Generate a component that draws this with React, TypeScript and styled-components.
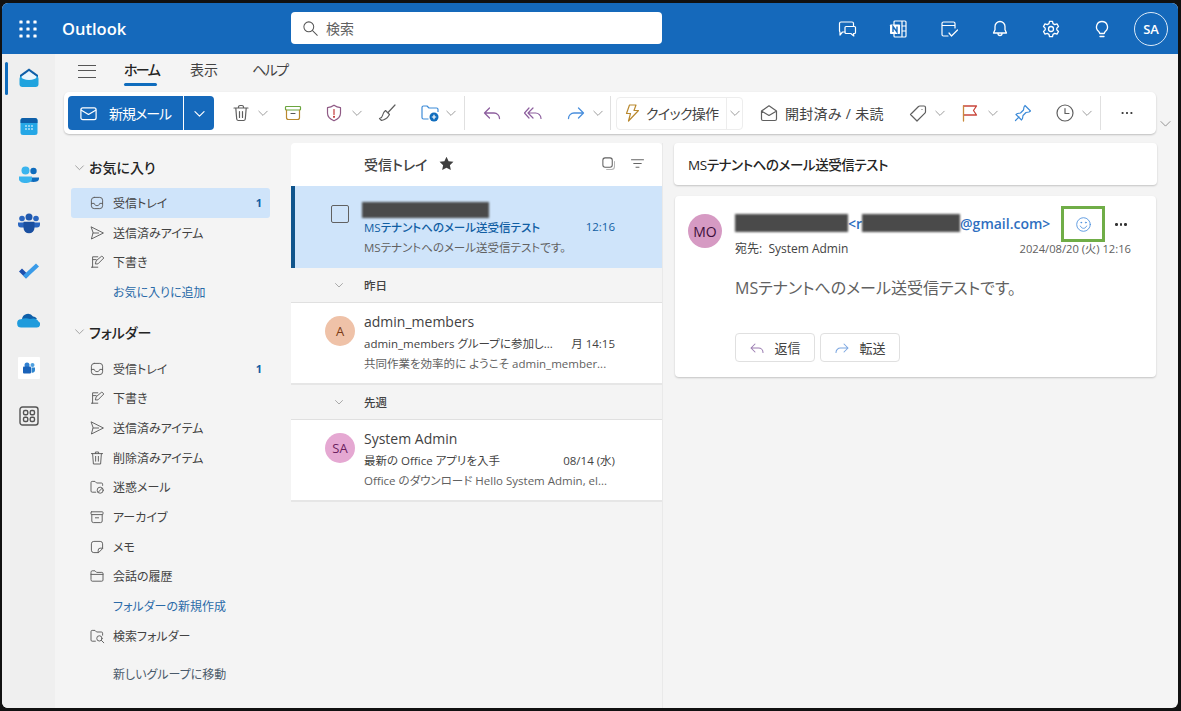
import React from "react";
import styled, { createGlobalStyle } from "styled-components";

const Global = createGlobalStyle`
  html, body { margin: 0; padding: 0; background: #111; }
  * { box-sizing: border-box; }
  body { font-family: "Open Sans", "Noto Sans CJK JP", sans-serif; color: #242424; font-feature-settings: "palt" 1; }
`;

const Frame = styled.div`
  width: 1181px; height: 711px; background: #111; padding: 3px 3px 3px 2px; overflow: hidden;
`;
const Window = styled.div`
  width: 100%; height: 100%; background: #f4f4f4; border-radius: 6px; overflow: hidden;
  display: flex; flex-direction: column;
`;
const Header = styled.header`
  height: 51px; flex: none; background: #1569bb; display: flex; align-items: center; color: #fff; position: relative;
`;
const Waffle = styled.div`
  width: 60px; flex: none; display: flex; justify-content: center; margin-left: -4px;
`;
const Brand = styled.div`
  width: 233px; flex: none; font-size: 16.5px; font-weight: 600; padding-left: 4px;
`;
const Search = styled.div`
  width: 371px; height: 32px; flex: none; background: #fff; border-radius: 4px; display: flex; align-items: center;
  gap: 7px; padding-left: 11px; color: #616161; font-size: 14px; margin-top: -1px;
`;
const HeaderIcons = styled.div`
  margin-left: auto; display: flex; align-items: center; padding-right: 9px;
`;
const HeaderBtn = styled.div`
  width: 51px; display: flex; justify-content: center;
`;
const Me = styled.div`
  width: 34px; height: 34px; border: 1.3px solid #dbe9f7; border-radius: 50%; display: flex; align-items: center;
  justify-content: center; font-size: 13px; font-weight: 600; margin-left: 7px; margin-right: 1px;
`;
const Body = styled.div`
  flex: 1; min-height: 0; display: flex;
`;
const Rail = styled.nav`
  width: 53px; flex: none; background: #efefef; display: flex; flex-direction: column; position: relative;
`;
const RailBtn = styled.div<{ $active?: boolean }>`
  height: 48.3px; flex: none; display: flex; align-items: center; justify-content: center; position: relative;
  ${(p) => p.$active && `&::before { content: ""; position: absolute; left: 3px; top: 8px; width: 3px; height: 33px; background: #0f6cbd; border-radius: 2px; }`}
`;
const Main = styled.div`
  flex: 1; min-width: 0; display: flex; flex-direction: column;
`;
const Tabs = styled.div`
  height: 38px; flex: none; display: flex; align-items: center; padding-left: 23px; font-size: 14px; color: #424242;
`;
const Burger = styled.div`
  width: 18px; height: 13px; border-top: 1.3px solid #555; border-bottom: 1.3px solid #555; position: relative; margin-right: 28px; margin-top: -4px;
  &::after { content: ""; position: absolute; left: 0; right: 0; top: 4.6px; height: 1.3px; background: #555; }
`;
const Tab = styled.div<{ $active?: boolean; $w: number; $gap: number; $tight?: boolean }>`
  height: 100%; width: ${(p) => p.$w}px; display: flex; align-items: center; margin-right: ${(p) => p.$gap}px; position: relative; padding-bottom: 8px; white-space: nowrap;
  letter-spacing: ${(p) => (p.$tight ? "-1.6px" : "0")};
  color: ${(p) => (p.$active ? "#242424" : "#424242")}; font-weight: ${(p) => (p.$active ? 500 : 400)};
  ${(p) => p.$active && `&::after { content: ""; position: absolute; left: 0; right: 0; bottom: 6px; height: 3px; background: #0f6cbd; border-radius: 2px; }`}
`;
const ToolbarRow = styled.div`
  flex: none; display: flex; align-items: flex-end; padding-left: 9px;
`;
const Toolbar = styled.div`
  width: 1092px; height: 42px; background: #fff; border-radius: 5px; box-shadow: 0 1px 2px rgba(0,0,0,.22);
  display: flex; align-items: center; padding-left: 4px; flex: none;
`;
const Expand = styled.div`
  width: 18px; display: flex; justify-content: center; padding-bottom: 4px;
`;
const NewMail = styled.div`
  width: 146px; height: 34px; background: #1569bb; border-radius: 4px; color: #fff; display: flex; align-items: center; font-size: 14px; flex: none;
`;
const NewMailMain = styled.div`
  width: 116px; height: 100%; border-right: 1px solid #fff; display: flex; align-items: center; padding-left: 11px; gap: 11px; letter-spacing: -1px; white-space: nowrap;
`;
const NewMailDrop = styled.div`
  flex: 1; display: flex; justify-content: center; padding-left: 1px;
`;
const ToolSlot = styled.div<{ $w: number }>`
  width: ${(p) => p.$w}px; flex: none; display: flex; align-items: center; justify-content: center; color: #424242;
`;
const Divider = styled.div`
  width: 1px; height: 34px; background: #e0e0e0; flex: none;
`;
const Quick = styled.div`
  width: 127px; height: 33px; flex: none; border: 1px solid #ededed; border-radius: 4px; display: flex; align-items: center; font-size: 14px; color: #424242;
`;
const QuickMain = styled.div`
  width: 110px; height: 100%; border-right: 1px solid #ededed; display: flex; align-items: center; padding-left: 5px; gap: 4px; white-space: nowrap; letter-spacing: -.7px;
`;
const QuickDrop = styled.div`
  flex: 1; display: flex; justify-content: center;
`;
const ReadToggle = styled.div`
  flex: none; display: flex; align-items: center; gap: 6px; font-size: 14px; color: #424242; width: 157px; padding-left: 16px; white-space: nowrap; letter-spacing: .3px;
`;
const Columns = styled.div`
  flex: 1; min-height: 0; display: flex; padding-top: 9px;
`;
const Folders = styled.aside`
  width: 236px; flex: none; padding: 11px 21px 0 16px;
`;
const SectionHead = styled.div<{ $mt?: number; $mb: number }>`
  height: 26px; margin-top: ${(p) => p.$mt ?? 0}px; margin-bottom: ${(p) => p.$mb}px; display: flex; align-items: center; gap: 4px; padding-left: 3px; font-size: 14px; font-weight: 500; color: #242424;
`;
const FolderRow = styled.div<{ $selected?: boolean; $mt?: number }>`
  height: 29.7px; margin-top: ${(p) => p.$mt ?? 0}px; display: flex; align-items: center; padding-left: 18px; gap: 8px; font-size: 12px; color: #424242;
  border-radius: 3px; background: ${(p) => (p.$selected ? "#cfe4fa" : "transparent")};
`;
const FolderLink = styled.span<{ $color?: string }>`
  padding-left: 24px; color: ${(p) => p.$color ?? "#2a6aa8"};
`;
const Count = styled.span`
  margin-left: auto; padding-right: 8px; font-size: 11px; font-weight: 700; color: #115ea3;
`;
const List = styled.section`
  width: 372px; flex: none; display: flex; flex-direction: column; border-right: 1px solid #e9e9e9;
`;
const ListHead = styled.div`
  height: 43px; flex: none; background: #fff; border-radius: 4px 4px 0 0; display: flex; align-items: center; padding-left: 73px; padding-bottom: 2px; font-size: 14px; font-weight: 500; color: #424242; position: relative;
`;
const ListHeadTools = styled.div`
  margin-left: auto; display: flex; align-items: center; gap: 14px; padding-right: 17px;
`;
const Star = styled.span`
  margin-left: 12px; display: flex;
`;
const Selected = styled.div`
  height: 82px; flex: none; background: #cfe4fa; border-left: 4px solid #0f548c; display: flex; padding-left: 36px; padding-right: 47px;
`;
const CheckCol = styled.div`
  width: 33px; flex: none; padding-top: 19px;
`;
const Check = styled.div`
  width: 18px; height: 18px; border: 1.4px solid #616161; border-radius: 2px;
`;
const MsgCol = styled.div`
  flex: 1; min-width: 0; display: flex; flex-direction: column;
`;
const Redact = styled.span<{ $w: number; $h: number }>`
  display: inline-block; flex: none; width: ${(p) => p.$w}px; height: ${(p) => p.$h}px; background: #4a4a4a; filter: blur(.8px); vertical-align: middle;
`;
const RedactWrap = styled.div`
  height: 30px; padding-top: 11px; margin-left: -2px;
`;
const SubjectLine = styled.div<{ $unread?: boolean }>`
  display: flex; justify-content: space-between; align-items: center; height: 21px; font-size: 11.5px; white-space: nowrap;
  color: ${(p) => (p.$unread ? "#115ea3" : "#424242")}; font-weight: ${(p) => (p.$unread ? 500 : 400)};
`;
const Preview = styled.div`
  height: 20px; display: flex; align-items: center; font-size: 11.5px; color: #616161; white-space: nowrap;
`;
const Group = styled.div`
  height: 35px; flex: none; display: flex; align-items: center; background: #f4f4f4; border-bottom: 1px solid #e0e0e0; padding-left: 43px; gap: 20px; font-size: 11.5px; font-weight: 500; color: #424242;
`;
const Item = styled.div`
  height: 82px; flex: none; background: #fff; border-bottom: 2px solid #e6e6e6; display: flex; padding-left: 34px; padding-right: 47px;
`;
const AvatarCol = styled.div`
  width: 39px; flex: none; padding-top: 13px;
`;
const Avatar = styled.div<{ $bg: string; $fg: string; $size: number; $fs: number }>`
  width: ${(p) => p.$size}px; height: ${(p) => p.$size}px; border-radius: 50%; background: ${(p) => p.$bg}; color: ${(p) => p.$fg};
  display: flex; align-items: center; justify-content: center; font-size: ${(p) => p.$fs}px; flex: none;
`;
const Sender = styled.div`
  height: 21px; margin-top: 8px; font-size: 14px; color: #424242; display: flex; align-items: center;
`;
const Reader = styled.section`
  flex: none; width: 483px; margin-left: 11px; display: flex; flex-direction: column; gap: 11px;
`;
const SubjectCard = styled.div`
  height: 42px; background: #fff; border-radius: 4px; box-shadow: 0 1px 2px rgba(0,0,0,.2); display: flex; align-items: center; padding-left: 14px; padding-bottom: 1px; font-size: 13.5px; letter-spacing: -.4px; font-weight: 500; color: #242424;
`;
const MsgCard = styled.article`
  height: 181px; width: 481px; margin-left: 1px; background: #fff; border-radius: 4px; box-shadow: 0 1px 2px rgba(0,0,0,.2); display: flex; padding: 18px 0 0 13px;
`;
const MsgMain = styled.div`
  flex: 1; min-width: 0; padding-left: 13px;
`;
const FromLine = styled.div`
  height: 20px; margin-top: -1px; display: flex; align-items: center; font-size: 14px; font-weight: 600; color: #2f6fc0; white-space: nowrap; position: relative;
`;
const GreenBox = styled.div`
  position: absolute; left: 326px; top: -7px; width: 44px; height: 36px; border: 3.5px solid #70ad47; display: flex; align-items: center; justify-content: center;
`;
const Dots = styled.div`
  position: absolute; left: 380px; top: 4px; display: flex; gap: 2px;
  & > i { width: 2.6px; height: 2.6px; border-radius: 50%; background: #333; margin-top: 6px; }
`;
const ToLine = styled.div`
  display: flex; justify-content: space-between; height: 18px; margin-top: 6px; align-items: center; font-size: 12px; color: #424242; padding-right: 25px;
`;
const DateText = styled.span`
  font-size: 11.2px; color: #616161;
`;
const MsgBody = styled.div`
  margin-top: 18px; height: 24px; display: flex; align-items: center; font-size: 16px; color: #616161;
`;
const Actions = styled.div`
  display: flex; gap: 5px; margin-top: 34px;
`;
const ActionBtn = styled.div`
  width: 80px; height: 29px; border: 1px solid #e0e0e0; border-radius: 4px; display: flex; align-items: center; justify-content: center; gap: 9px; font-size: 13px; color: #424242;
`;

const Ico = ({ s = 20, children, c = "currentColor", w = 1.2 }: { s?: number; children: React.ReactNode; c?: string; w?: number }) => (
  <svg width={s} height={s} viewBox="0 0 20 20" fill="none" stroke={c} strokeWidth={w} strokeLinecap="round" strokeLinejoin="round" style={{ flex: "none", display: "block" }}>
    {children}
  </svg>
);
const Chev = ({ c = "#8a8a8a", s = 12, w = 1.4 }: { c?: string; s?: number; w?: number }) => (
  <Ico s={s} c={c} w={w}><path d="M3 7l7 7 7-7" /></Ico>
);
const I = {
  waffle: () => (
    <svg width="18" height="18" viewBox="0 0 18 18" fill="#fff" style={{ display: "block" }}>
      {[2, 9, 16].flatMap((y) => [2, 9, 16].map((x) => <rect key={`${x}-${y}`} x={x - 1.6} y={y - 1.6} width="3.2" height="3.2" rx=".6" />))}
    </svg>
  ),
  search: () => <Ico s={17} c="#555"><circle cx="8" cy="8" r="5.8" /><path d="M12.4 12.4L18 18" /></Ico>,
  chat: () => <Ico s={20} c="#fff"><path d="M4 3h11a1.5 1.5 0 011.5 1.5V7M8 13H5.500L3 16v-3a1.500 1.500 0 01-.5-1V4.500A1.500 1.500 0 014 3" /><path d="M9 7.500h8.500a1 1 0 011 1v5a1 1 0 01-1 1h-1l.3 2.500-3-2.500H9a1 1 0 01-1-1v-5a1 1 0 011-1z" /></Ico>,
  onenote: () => (
    <svg width="20" height="20" viewBox="0 0 20 20" fill="none" stroke="#fff" strokeWidth="1.2" style={{ display: "block" }}>
      <rect x="6" y="2" width="12" height="16" rx="1" /><path d="M14 2v16M14 7h4M14 12h4" />
      <rect x="2" y="5.500" width="10" height="9.500" rx=".8" fill="#fff" stroke="none" />
      <path d="M5 13V7.500l4 5.500V7.500" stroke="#1569bb" strokeWidth="1.4" />
    </svg>
  ),
  todoCal: () => <Ico s={20} c="#fff"><path d="M9 17H4.500A1.500 1.500 0 013 15.500v-11A1.500 1.500 0 014.500 3h10A1.500 1.500 0 0116 4.500V9M3 6.500h13" /><path d="M10 14l2.500 3 6-6" /></Ico>,
  bell: () => <Ico s={20} c="#fff" w={1.3}><path d="M10 2.500a5 5 0 015 5v3.300l1.500 3.200h-13L5 10.800V7.500a5 5 0 015-5zM8 14.500a2 2 0 004 0" /></Ico>,
  gear: () => <Ico s={20} c="#fff" w={1.3}><circle cx="10" cy="10" r="2.500" /><path d="M8.500 2.300h3l.5 2.300 1.700 1 2.300-.7 1.500 2.600-1.700 1.600v1.800l1.700 1.600-1.500 2.600-2.300-.7-1.700 1-.5 2.300h-3l-.5-2.300-1.700-1-2.300.7-1.500-2.600 1.700-1.600V9.100L2.500 7.500 4 4.900l2.300.7 1.700-1z" /></Ico>,
  bulb: () => <Ico s={20} c="#fff" w={1.3}><path d="M10 2.500a5.500 5.500 0 00-3.300 9.900c.7.6.9 1.300 1.100 2.100h4.400c.2-.8.4-1.500 1.100-2.100A5.500 5.500 0 0010 2.500zM8 17.500h4" /></Ico>,
  railMail: () => (
    <svg width="22" height="22" viewBox="0 0 22 22" style={{ display: "block" }}>
      <path d="M11 1.500L20 8v3H2V8z" fill="#0f5fa8" /><path d="M11 4l6 4.500H5z" fill="#e8f3fb" />
      <rect x="1.500" y="9" width="19" height="11" rx="3" fill="#20a3de" /><ellipse cx="11" cy="10" rx="7.500" ry="3" fill="#eaf5fc" />
    </svg>
  ),
  railCal: () => (
    <svg width="20" height="20" viewBox="0 0 20 20" style={{ display: "block" }}>
      <rect x="1.500" y="2" width="17" height="17" rx="2.500" fill="#25a7e6" /><path d="M1.500 7V4.500A2.500 2.500 0 014 2h12a2.500 2.500 0 012.500 2.500V7z" fill="#0f5fa8" />
      {[7, 10, 13].flatMap((x) => [10, 13].map((y) => <rect key={`${x}${y}`} x={x - .7} y={y - .7} width="1.4" height="1.4" fill="#fff" />))}
    </svg>
  ),
  railPeople: () => (
    <svg width="22" height="20" viewBox="0 0 22 20" style={{ display: "block" }}>
      <circle cx="15.500" cy="6" r="3.200" fill="#0f6cbd" /><path d="M10 12.500h11v1.500c0 2-2.500 3-5.500 3S10 16 10 14z" fill="#0f6cbd" />
      <circle cx="7.500" cy="5.500" r="4" fill="#3ab4ee" /><path d="M1 11.500h13v2.500c0 2.500-3 4-6.500 4S1 16.500 1 14z" fill="#3ab4ee" />
    </svg>
  ),
  railTeams: () => (
    <svg width="22" height="21" viewBox="0 0 22 21" style={{ display: "block" }}>
      <circle cx="4" cy="5.500" r="2.800" fill="#2a66c0" /><circle cx="18" cy="5.500" r="2.800" fill="#2a66c0" /><circle cx="11" cy="4" r="3.500" fill="#1f58ad" />
      <path d="M0 9.500h6v5H3a3 3 0 01-3-3zM16 9.500h6v2a3 3 0 01-3 3h-3z" fill="#2a66c0" /><path d="M5.500 8.800h11v6a5.500 5.500 0 01-11 0z" fill="#1a4fa0" />
    </svg>
  ),
  railTodo: () => (
    <svg width="22" height="20" viewBox="0 0 22 20" style={{ display: "block" }}>
      <path d="M8 17.500L1 10.500l3-3 7 7z" fill="#1c4fae" /><path d="M8 17.500l-3-3L18 2.500l3 3z" fill="#3a9be8" />
    </svg>
  ),
  railCloud: () => (
    <svg width="23" height="16" viewBox="0 0 23 16" style={{ display: "block" }}>
      <path d="M5 7a6 6 0 0111-2.500c2 .2 3 1 4 2.500z" fill="#0f5fa8" /><path d="M4.500 15.500A4 4 0 014 7.300C7 6 10 6 13 7c3-1 7-1 8.500 2.500a3.200 3.200 0 01-1.500 6z" fill="#1f9bdc" />
    </svg>
  ),
  railCopilot: () => (
    <svg width="22" height="22" viewBox="0 0 22 22" style={{ display: "block" }}>
      <rect width="22" height="22" rx="1" fill="#fff" /><circle cx="14.500" cy="8" r="2" fill="#4d9fe0" /><circle cx="9" cy="8" r="2.500" fill="#2f7fd0" /><rect x="5" y="9.500" width="8" height="7" rx="1" fill="#1a62b8" />
      <path d="M13.500 10.500h3.500v2.500a2.500 2.500 0 01-3.500 2.500z" fill="#2f86d0" />
    </svg>
  ),
  railApps: () => (
    <svg width="20" height="20" viewBox="0 0 20 20" fill="none" stroke="#555" strokeWidth="1.4" style={{ display: "block" }}>
      <rect x="1" y="1" width="18" height="18" rx="2.500" /><rect x="4.500" y="4.500" width="4.300" height="4.300" rx="1.500" /><rect x="11.200" y="4.500" width="4.300" height="4.300" rx="1.500" /><rect x="4.500" y="11.200" width="4.300" height="4.300" rx="1.500" /><rect x="11.200" y="11.200" width="4.300" height="4.300" rx="1.500" />
    </svg>
  ),
  mail: () => <Ico s={19} c="#fff" w={1.3}><rect x="2" y="4" width="16" height="12.500" rx="2" /><path d="M2.500 6.500L10 11l7.500-4.500" /></Ico>,
  trash: () => <Ico s={20} c="#5f5f5f"><path d="M3 5h14M7.500 5V3.800A1.500 1.500 0 019 2.500h2a1.500 1.500 0 011.500 1.300V5M4.800 5l.9 11a1.800 1.800 0 001.800 1.500h5a1.800 1.800 0 001.800-1.500l.9-11M8.500 8.500v6M11.500 8.500v6" /></Ico>,
  archive: () => <Ico s={20} c="#6ba53f"><rect x="2.500" y="3.500" width="15" height="3.500" rx=".8" /><path d="M3.500 7v7.500a2 2 0 002 2h9a2 2 0 002-2V7" stroke="#b9892f" /><path d="M8 10.500h4" stroke="#555" /></Ico>,
  shield: () => <Ico s={20} c="#8f5a85"><path d="M10 2.200c2.200 1.600 4.500 2.300 6.500 2.500v5.500c0 3.600-2.800 6-6.500 7.600-3.700-1.600-6.500-4-6.500-7.600V4.700c2-.2 4.300-.9 6.500-2.500z" /><path d="M10 6.500v5" stroke="#c43a3a" /><circle cx="10" cy="13.800" r=".5" stroke="#c43a3a" /></Ico>,
  broom: () => <Ico s={20} c="#5f5f5f"><path d="M18 2l-6.500 7M8.500 7.500l4 4-1 1.500c-1.500 2.500-4 3.800-7 4.500l-2-2c1.500-.5 2.800-1.500 3-3 .3-1.500 1-3.500 3-5z" /></Ico>,
  moveFolder: () => <svg width="20" height="20" viewBox="0 0 20 20" fill="none" style={{ display: "block" }}><path d="M8.500 16H3.500A1.500 1.500 0 012 14.500v-10A1.500 1.500 0 013.500 3h3.500l2 2h7.500A1.500 1.500 0 0118 6.500V9" stroke="#3d8bd8" strokeWidth="1.2" strokeLinejoin="round" /><circle cx="14" cy="14" r="4.500" fill="#0f6cbd" /><path d="M14 11.800v4.400M11.800 14h4.400" stroke="#fff" strokeWidth="1.2" /></svg>,
  reply: ({ c = "#8d5f9e", s = 20 }: { c?: string; s?: number }) => <Ico s={s} c={c} w={1.3}><path d="M7.500 5L2.500 10l5 5M2.500 10H12a5.500 5.500 0 015.500 5.500" /></Ico>,
  replyAll: () => <Ico s={20} c="#8d5f9e" w={1.2}><path d="M6 5L1.500 10 6 15M10 5l-5 5 5 5M5 10h7.500a5.500 5.500 0 015.500 5.500" /></Ico>,
  forward: ({ c = "#4a8fdd", s = 20 }: { c?: string; s?: number }) => <Ico s={s} c={c} w={1.3}><path d="M12.500 5l5 5-5 5M17.500 10H8a5.500 5.500 0 00-5.500 5.500" /></Ico>,
  bolt: () => <Ico s={20} c="#b9892f"><path d="M7.500 2h6.500l-2 5.500h4.500l-10 10.500 2-7.500H4.500z" /></Ico>,
  openMail: () => <Ico s={20} c="#5f5f5f"><path d="M2.500 8L10 2.800 17.500 8v8a1.500 1.500 0 01-1.500 1.500H4A1.500 1.500 0 012.500 16zM2.800 8.200L10 12.500l7.200-4.300" /></Ico>,
  tag: () => <Ico s={20} c="#5f5f5f"><path d="M2.500 11.500L10.500 3.500a2 2 0 011.400-.5H16a1.500 1.500 0 011.500 1.500v4.200a2 2 0 01-.6 1.400L9 18zM14 6.500h.01" /></Ico>,
  flag: () => <svg width="20" height="20" viewBox="0 0 20 20" fill="none" strokeWidth="1.3" strokeLinejoin="round" strokeLinecap="round" style={{ display: "block" }}><path d="M3.500 3h13l-3 4.500 3 4.500h-13" stroke="#c9453b" /><path d="M3.500 3v15" stroke="#c98a3b" /></svg>,
  pin: () => <Ico s={20} c="#3d8bd8"><path d="M12 2.500l5.500 5.500-1.500 1-3 .5-3 3-.5 3-1 1.500-5.500-5.500 1.500-1 3-.5 3-3 .5-3zM6 14l-3.500 3.500" /></Ico>,
  clock: () => <Ico s={20} c="#5f5f5f"><circle cx="10" cy="10" r="8" /><path d="M10 5.500V10.500H14" /></Ico>,
  inbox: () => <Ico s={16} c="#5f5f5f"><rect x="3" y="3" width="14" height="14" rx="3.500" /><path d="M3 10.500h3.500c.5 2 1.800 2.800 3.500 2.800s3-.8 3.500-2.800H17" /></Ico>,
  send: () => <Ico s={16} c="#5f5f5f"><path d="M3 2.500L18 10 3 17.500l2-7.500zM5 10h7" /></Ico>,
  draft: () => <Ico s={16} c="#5f5f5f"><path d="M11 3.500H4.500v13" /><path d="M3 16.500h8M8 12l1-3.500 7-6 2.500 2.500-7 7z" /><path d="M5 7h4" /></Ico>,
  del: () => <Ico s={16} c="#5f5f5f"><path d="M3 4.500h14M8 4.500v-2h4v2M4.500 4.500l1 13h9l1-13M8.300 8v6M11.700 8v6" /></Ico>,
  junk: () => <Ico s={16} c="#5f5f5f"><path d="M8.500 16.500H4A1.500 1.500 0 012.500 15V4.500A1.500 1.500 0 014 3h3.500l2 2h6A1.500 1.500 0 0117 6.500V8" /><circle cx="14" cy="14" r="3.800" /><path d="M11.500 16.500l5-5" /></Ico>,
  arch: () => <Ico s={16} c="#5f5f5f"><rect x="2.500" y="3.500" width="15" height="3.500" rx=".8" /><path d="M3.500 7v8a2 2 0 002 2h9a2 2 0 002-2V7M8 11h4" /></Ico>,
  note: () => <Ico s={16} c="#5f5f5f"><path d="M11.500 17H6a3 3 0 01-3-3V6a3 3 0 013-3h8a3 3 0 013 3v5.500zM11.500 17v-3a2.500 2.500 0 012.500-2.500h3" /></Ico>,
  folder: () => <Ico s={16} c="#5f5f5f"><path d="M2.500 5A1.500 1.500 0 014 3.500h3.500l2 2h6.500A1.500 1.500 0 0117.500 7v8a1.500 1.500 0 01-1.500 1.500H4A1.500 1.500 0 012.500 15zM2.500 8h15" /></Ico>,
  searchFolder: () => <Ico s={16} c="#5f5f5f"><path d="M8 16.500H4A1.500 1.500 0 012.500 15V4.500A1.500 1.500 0 014 3h3.500l2 2h6A1.500 1.500 0 0117 6.500V9" /><circle cx="13" cy="13" r="3.300" /><path d="M15.500 15.500L18.500 18.500" /></Ico>,
  star: () => <svg width="15" height="15" viewBox="0 0 20 20" fill="#3f3f3f" style={{ display: "block" }}><path d="M10 1l2.800 6 6.500.8-4.800 4.500 1.300 6.500L10 15.500l-5.800 3.300 1.300-6.500L.7 7.800 7.200 7z" /></svg>,
  selectAll: () => <Ico s={15} c="#616161" w={1.4}><rect x="2.500" y="2.500" width="12.500" height="12.500" rx="3" /><path d="M18 7.500V14a4 4 0 01-4 4H7.500" stroke="#b5b5b5" /></Ico>,
  filter: () => <Ico s={15} c="#616161" w={1.3}><path d="M2 5h16M5 10h10M8 15h4" /></Ico>,
  smile: () => <Ico s={17} c="#4a8fdd" w={1}><circle cx="10" cy="10" r="8" /><path d="M6.300 11.800c1 2 2.300 2.700 3.700 2.700s2.700-.7 3.700-2.700" /><circle cx="7.300" cy="7.800" r=".5" /><circle cx="12.700" cy="7.800" r=".5" /></Ico>,
  dots: () => <Ico s={16} c="#333" w={2.8}><path d="M4.500 10h.01M10 10h.01M15.500 10h.01" /></Ico>,
};

const favs = [
  { icon: I.inbox, label: "受信トレイ", count: "1", selected: true },
  { icon: I.send, label: "送信済みアイテム" },
  { icon: I.draft, label: "下書き" },
];
const folders = [
  { icon: I.inbox, label: "受信トレイ", count: "1" },
  { icon: I.draft, label: "下書き" },
  { icon: I.send, label: "送信済みアイテム" },
  { icon: I.del, label: "削除済みアイテム" },
  { icon: I.junk, label: "迷惑メール" },
  { icon: I.arch, label: "アーカイブ" },
  { icon: I.note, label: "メモ" },
  { icon: I.folder, label: "会話の履歴" },
];

const Row = ({ icon: Icon, label, count, selected }: { icon: () => React.ReactElement; label: string; count?: string; selected?: boolean }) => (
  <FolderRow $selected={selected}>
    <Icon />
    <span>{label}</span>
    {count && <Count>{count}</Count>}
  </FolderRow>
);

const Tool = ({ w, children }: { w: number; children?: React.ReactNode }) => <ToolSlot $w={w}>{children}</ToolSlot>;

export default function App() {
  return (
    <Frame>
      <Global />
      <Window>
        <Header>
          <Waffle><I.waffle /></Waffle>
          <Brand>Outlook</Brand>
          <Search><I.search />検索</Search>
          <HeaderIcons>
            <HeaderBtn><I.chat /></HeaderBtn>
            <HeaderBtn><I.onenote /></HeaderBtn>
            <HeaderBtn><I.todoCal /></HeaderBtn>
            <HeaderBtn><I.bell /></HeaderBtn>
            <HeaderBtn><I.gear /></HeaderBtn>
            <HeaderBtn><I.bulb /></HeaderBtn>
            <Me>SA</Me>
          </HeaderIcons>
        </Header>
        <Body>
          <Rail>
            <RailBtn $active><I.railMail /></RailBtn>
            <RailBtn><I.railCal /></RailBtn>
            <RailBtn><I.railPeople /></RailBtn>
            <RailBtn><I.railTeams /></RailBtn>
            <RailBtn><I.railTodo /></RailBtn>
            <RailBtn><I.railCloud /></RailBtn>
            <RailBtn><I.railCopilot /></RailBtn>
            <RailBtn><I.railApps /></RailBtn>
          </Rail>
          <Main>
            <Tabs>
              <Burger />
              <Tab $active $tight $w={33} $gap={33}>ホーム</Tab>
              <Tab $w={29} $gap={33}>表示</Tab>
              <Tab $tight $w={35} $gap={0}>ヘルプ</Tab>
            </Tabs>
            <ToolbarRow>
              <Toolbar>
                <NewMail>
                  <NewMailMain><I.mail />新規メール</NewMailMain>
                  <NewMailDrop><Chev c="#fff" s={13} w={1.8} /></NewMailDrop>
                </NewMail>
                <Tool w={17} />
                <Tool w={20}><I.trash /></Tool>
                <Tool w={24}><Chev /></Tool>
                <Tool w={36}><I.archive /></Tool>
                <Tool w={46}><I.shield /></Tool>
                <Tool w={0}><Chev /></Tool>
                <Tool w={60}><I.broom /></Tool>
                <Tool w={26}><I.moveFolder /></Tool>
                <Tool w={16}><Chev /></Tool>
                <Tool w={5} />
                <Divider />
                <Tool w={53}><I.reply /></Tool>
                <Tool w={30}><I.replyAll /></Tool>
                <Tool w={18} />
                <Tool w={20}><I.forward /></Tool>
                <Tool w={24}><Chev /></Tool>
                <Divider />
                <Tool w={5} />
                <Quick>
                  <QuickMain><I.bolt />クイック操作</QuickMain>
                  <QuickDrop><Chev /></QuickDrop>
                </Quick>
                <ReadToggle><I.openMail />開封済み / 未読</ReadToggle>
                <Tool w={36}><I.tag /></Tool>
                <Tool w={8}><Chev /></Tool>
                <Tool w={16} />
                <Tool w={20}><I.flag /></Tool>
                <Tool w={26}><Chev /></Tool>
                <Tool w={34}><I.pin /></Tool>
                <Tool w={15} />
                <Tool w={20}><I.clock /></Tool>
                <Tool w={24}><Chev /></Tool>
                <Tool w={1} />
                <Divider />
                <Tool w={52}><I.dots /></Tool>
              </Toolbar>
              <Expand><Chev s={13} /></Expand>
            </ToolbarRow>
            <Columns>
              <Folders>
                <SectionHead $mb={8}><Chev s={11} />お気に入り</SectionHead>
                {favs.map((f) => <Row key={f.label} {...f} />)}
                <FolderRow><FolderLink>お気に入りに追加</FolderLink></FolderRow>
                <SectionHead $mt={12} $mb={9}><Chev s={11} />フォルダー</SectionHead>
                {folders.map((f) => <Row key={f.label} {...f} />)}
                <FolderRow><FolderLink>フォルダーの新規作成</FolderLink></FolderRow>
                <Row icon={I.searchFolder} label="検索フォルダー" />
                <FolderRow $mt={9}><FolderLink $color="#4a5a6a">新しいグループに移動</FolderLink></FolderRow>
              </Folders>
              <List>
                <ListHead>
                  受信トレイ
                  <Star><I.star /></Star>
                  <ListHeadTools><I.selectAll /><I.filter /></ListHeadTools>
                </ListHead>
                <Selected>
                  <CheckCol><Check /></CheckCol>
                  <MsgCol>
                    <RedactWrap><Redact $w={127} $h={16} /></RedactWrap>
                    <SubjectLine $unread><span>MSテナントへのメール送受信テスト</span><span>12:16</span></SubjectLine>
                    <Preview>MSテナントへのメール送受信テストです。</Preview>
                  </MsgCol>
                </Selected>
                <Group><Chev s={10} />昨日</Group>
                <Item>
                  <AvatarCol><Avatar $bg="#efc2a8" $fg="#7a3a14" $size={30} $fs={13}>A</Avatar></AvatarCol>
                  <MsgCol>
                    <Sender>admin_members</Sender>
                    <SubjectLine><span>admin_members グループに参加し...</span><span>月 14:15</span></SubjectLine>
                    <Preview>共同作業を効率的に ようこそ admin_member...</Preview>
                  </MsgCol>
                </Item>
                <Group><Chev s={10} />先週</Group>
                <Item>
                  <AvatarCol><Avatar $bg="#e5a8d2" $fg="#6b1f5e" $size={30} $fs={13}>SA</Avatar></AvatarCol>
                  <MsgCol>
                    <Sender>System Admin</Sender>
                    <SubjectLine><span>最新の Office アプリを入手</span><span>08/14 (水)</span></SubjectLine>
                    <Preview>Office のダウンロード Hello System Admin, el...</Preview>
                  </MsgCol>
                </Item>
              </List>
              <Reader>
                <SubjectCard>MSテナントへのメール送受信テスト</SubjectCard>
                <MsgCard>
                  <Avatar $bg="#d69ac3" $fg="#3d0f3a" $size={34} $fs={14}>MO</Avatar>
                  <MsgMain>
                    <FromLine>
                      <Redact $w={113} $h={18} />
                      <span>&lt;r</span>
                      <Redact $w={98} $h={18} />
                      <span>@gmail.com&gt;</span>
                      <GreenBox><I.smile /></GreenBox>
                      <Dots><i /><i /><i /></Dots>
                    </FromLine>
                    <ToLine><span>宛先:&nbsp; System Admin</span><DateText>2024/08/20 (火) 12:16</DateText></ToLine>
                    <MsgBody>MSテナントへのメール送受信テストです。</MsgBody>
                    <Actions>
                      <ActionBtn><I.reply s={16} c="#9a7bb0" />返信</ActionBtn>
                      <ActionBtn><I.forward s={16} c="#7aa5e0" />転送</ActionBtn>
                    </Actions>
                  </MsgMain>
                </MsgCard>
              </Reader>
            </Columns>
          </Main>
        </Body>
      </Window>
    </Frame>
  );
}
